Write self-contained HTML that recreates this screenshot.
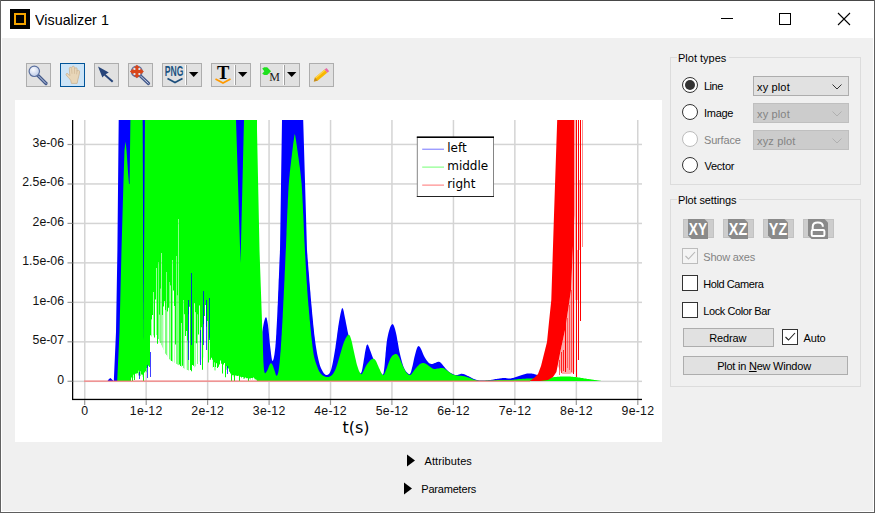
<!DOCTYPE html>
<html lang="en">
<head>
<meta charset="utf-8">
<title>Visualizer 1</title>
<style>
*{box-sizing:border-box;margin:0;padding:0}
html,body{width:875px;height:513px;overflow:hidden;background:#f0f0f0}
body{position:relative;font-family:"Liberation Sans","DejaVu Sans",sans-serif;font-size:11px;color:#000}
.abs{position:absolute}
#frame-top{left:0;top:0;width:875px;height:1px;background:#484848}
#frame-left{left:0;top:0;width:1px;height:513px;background:#626262}
#frame-right{left:874px;top:0;width:1px;height:513px;background:#5e5e5e}
#frame-bottom{left:0;top:512px;width:875px;height:1px;background:#5e5e5e}
#titlebar{left:1px;top:1px;width:873px;height:37px;background:#fff}
#inner{left:1px;top:1px;width:873px;height:511px;border:1px solid #fff;border-top:none;pointer-events:none}
#appicon{left:10px;top:9px;width:20px;height:20px;background:#000}
#appicon i{position:absolute;left:4px;top:4px;width:12px;height:12px;border:2px solid #f5a500}
#title{left:35px;top:10px;font-size:15.5px;line-height:20px;color:#000;white-space:nowrap;transform:scaleX(0.925);transform-origin:0 0}
.tb{position:absolute;top:63px;height:24px;background:#e1e1e1;border:1px solid #adadad}
.tb.sel{background:#cce4f7;border-color:#005499}
.tb svg{position:absolute;left:-1px;top:-1px}
.plot{position:absolute;left:15px;top:100px}
.tk{font-family:"Liberation Sans",sans-serif;font-size:12.3px;fill:#111}
.tkx{letter-spacing:0.25px}
.ttl{font-family:"DejaVu Sans",sans-serif;font-size:16px;fill:#000}
.lg{font-family:"DejaVu Sans",sans-serif;font-size:12px;fill:#000}
.gb{position:absolute;border:1px solid #dcdcdc}
.gbt{position:absolute;background:#f0f0f0;padding:0 3px 0 1px;line-height:14px;white-space:nowrap}
.lbl{position:absolute;line-height:14px;white-space:nowrap}
.dis{color:#838383}
.radio{position:absolute;width:16px;height:16px;border-radius:50%;border:1px solid #333;background:#fff}
.radio.on::after{content:"";position:absolute;left:2px;top:2px;width:10px;height:10px;border-radius:50%;background:#333}
.radio.off{border-color:#bcbcbc}
.combo{position:absolute;width:96px;height:20px;background:#e1e1e1;border:1px solid #adadad;line-height:20px;padding-left:3px;font-size:11px;letter-spacing:0.15px}
.combo.off{background:#cccccc;border-color:#bfbfbf;color:#838383}
.combo svg{position:absolute;right:6px;top:7px}
.cb{position:absolute;width:16px;height:16px;border:1px solid #333;background:#fff}
.cb.off{border-color:#bcbcbc;background:#f4f4f4}
.cb svg{position:absolute;left:0;top:0}
.btn{position:absolute;background:#e1e1e1;border:1px solid #adadad;text-align:center;line-height:17px;height:19px;padding-top:1px;overflow:hidden}
.ib{position:absolute;top:219px;width:31px;height:19px;background:#cdcdcd;border:1px solid #c2c2c2}
.ib svg{position:absolute;left:-1px;top:-1px;overflow:visible}
</style>
</head>
<body>
<div class="abs" id="titlebar"></div>
<div class="abs" id="appicon"><i></i></div>
<div class="abs" id="title">Visualizer 1</div>
<svg class="abs" style="left:715px;top:8px" width="145" height="24" viewBox="0 0 145 24">
  <path d="M6 10.5H18" stroke="#000" stroke-width="1" fill="none"/>
  <rect x="64.5" y="5.5" width="11" height="11" stroke="#000" stroke-width="1" fill="none"/>
  <path d="M123 5L135 17M135 5L123 17" stroke="#000" stroke-width="1.1" fill="none"/>
</svg>

<!-- toolbar -->
<div class="tb" style="left:26px;width:25px">
<svg width="25" height="24" viewBox="0 0 25 24">
  <defs><radialGradient id="lens" cx="0.4" cy="0.35" r="0.7"><stop offset="0" stop-color="#fbfcff"/><stop offset="1" stop-color="#b9c8e6"/></radialGradient></defs>
  <path d="M12 12.5L20 20.5" stroke="#42588a" stroke-width="3.2" stroke-linecap="round"/>
  <path d="M12.5 13L19.8 20.3" stroke="#c9d3ea" stroke-width="1" stroke-linecap="round"/>
  <circle cx="8.3" cy="8.3" r="5.2" fill="url(#lens)" stroke="#5a6f9e" stroke-width="1.2"/>
</svg></div>
<div class="tb sel" style="left:60px;width:25px">
<svg width="25" height="24" viewBox="0 0 25 24">
  <path d="M11.4 20.4 L10.8 17.6 C9.6 15 7 13.6 6.1 11.9 C5.6 10.6 7 9.9 8 10.8 L9.8 12.6 L9.3 5.6 C9.2 4 11.2 3.9 11.5 5.3 L11.9 4.2 C12.2 2.8 14.3 2.8 14.5 4.2 L14.8 5.5 C15.3 4.2 17.2 4.6 17.1 5.9 L17.2 8.1 C17.9 6.8 19.7 7.3 19.6 8.7 C19.3 12.2 18 15.2 17.1 20.4 Z" fill="#e8d6b8" stroke="#c9ae8b" stroke-width="0.7"/>
  <path d="M11.6 5.5L12 10.8M14.6 5L14.4 10.8M17.1 7L16.6 11.3" stroke="#cdb492" stroke-width="0.7" fill="none"/>
</svg></div>
<div class="tb" style="left:94px;width:25px">
<svg width="25" height="24" viewBox="0 0 25 24">
  <path d="M4 3.4 L14.8 9.4 L11.6 11.2 L19.4 18 L18 19.6 L10.2 12.6 L8.4 14.6 Z" fill="#27457a"/>
</svg></div>
<div class="tb" style="left:128px;width:25px">
<svg width="25" height="24" viewBox="0 0 25 24">
  <path d="M12 12.5L20.5 20.5" stroke="#42588a" stroke-width="3.2" stroke-linecap="round"/>
  <path d="M12.5 13L20.3 20.3" stroke="#c9d3ea" stroke-width="1" stroke-linecap="round"/>
  <circle cx="8.8" cy="8.4" r="5.4" fill="#dfe3ec" stroke="#5a6f9e" stroke-width="1.2"/>
  <path d="M8.9 1.8 L12.1 5.1 L10.4 5.1 L10.4 7.0 L12.3 7.0 L12.3 5.3 L15.9 8.5 L12.3 11.7 L12.3 10.0 L10.4 10.0 L10.4 11.9 L12.1 11.9 L8.9 15.2 L5.7 11.9 L7.4 11.9 L7.4 10.0 L5.5 10.0 L5.5 11.7 L1.9 8.5 L5.5 5.3 L5.5 7.0 L7.4 7.0 L7.4 5.1 L5.7 5.1Z" fill="#d9471b"/>
</svg></div>
<div class="tb" style="left:162px;width:40px">
<svg width="40" height="24" viewBox="0 0 40 24">
  <text x="2.8" y="13.4" font-family="Liberation Sans,sans-serif" font-weight="bold" font-size="14" fill="#1d5482" textLength="18.6" lengthAdjust="spacingAndGlyphs">PNG</text>
  <path d="M5.5 15.5L13 19.5L20.5 15.5" stroke="#1d4f7c" stroke-width="1.7" fill="none"/>
  <path d="M23.5 2V22" stroke="#fff" stroke-width="1"/><path d="M24.5 2V22" stroke="#a0a0a0" stroke-width="1"/>
  <path d="M27 9H36.4L31.7 14Z" fill="#000"/>
</svg></div>
<div class="tb" style="left:211px;width:40px">
<svg width="40" height="24" viewBox="0 0 40 24">
  <text x="12.2" y="15.7" text-anchor="middle" font-family="Liberation Serif,serif" font-weight="bold" font-size="18.5" fill="#000">T</text>
  <path d="M4.5 16L12 20L19.5 16" stroke="#ff9a00" stroke-width="1.7" fill="none"/>
  <path d="M23.5 2V22" stroke="#fff" stroke-width="1"/><path d="M24.5 2V22" stroke="#a0a0a0" stroke-width="1"/>
  <path d="M27 9H36.4L31.7 14Z" fill="#000"/>
</svg></div>
<div class="tb" style="left:260px;width:40px">
<svg width="40" height="24" viewBox="0 0 40 24">
  <path d="M2.2 5.6 L4.3 4.3 H7.2 L11.1 8.2 L7.2 12 H4.3 L2.2 10.8 L4.3 8.2 Z" fill="#1fe01f"/>
  <text x="14.5" y="17.8" text-anchor="middle" font-family="Liberation Serif,serif" font-size="12" fill="#1a1a1a">M</text>
  <path d="M23.5 2V22" stroke="#fff" stroke-width="1"/><path d="M24.5 2V22" stroke="#a0a0a0" stroke-width="1"/>
  <path d="M27 9H36.4L31.7 14Z" fill="#000"/>
</svg></div>
<div class="tb" style="left:309px;width:25px">
<svg width="25" height="24" viewBox="0 0 25 24">
  <path d="M4.8 18.5 L6 14.6 L15.6 6.6 L18.2 9.8 L8.6 17.8 Z" fill="#f8b800"/>
  <path d="M6 14.6 L15.6 6.6 L16.4 7.6 L6.8 15.6Z" fill="#ffd34d"/>
  <path d="M15.6 6.6 L17.6 5 L20.2 8.2 L18.2 9.8 Z" fill="#e66aa8"/>
  <path d="M4.8 18.5 L6 14.6 L8.6 17.8 Z" fill="#c08a2a"/>
</svg></div>

<svg class="plot" width="647" height="342" viewBox="0 0 647 342">
<rect width="647" height="342" fill="#fff"/>
<rect x="69.0" y="20.0" width="1.5" height="279.0" fill="#d4d4d4"/>
<rect x="130.4" y="20.0" width="1.5" height="279.0" fill="#d4d4d4"/>
<rect x="191.9" y="20.0" width="1.5" height="279.0" fill="#d4d4d4"/>
<rect x="253.3" y="20.0" width="1.5" height="279.0" fill="#d4d4d4"/>
<rect x="314.8" y="20.0" width="1.5" height="279.0" fill="#d4d4d4"/>
<rect x="376.2" y="20.0" width="1.5" height="279.0" fill="#d4d4d4"/>
<rect x="437.7" y="20.0" width="1.5" height="279.0" fill="#d4d4d4"/>
<rect x="499.1" y="20.0" width="1.5" height="279.0" fill="#d4d4d4"/>
<rect x="560.6" y="20.0" width="1.5" height="279.0" fill="#d4d4d4"/>
<rect x="622.0" y="20.0" width="1.5" height="279.0" fill="#d4d4d4"/>
<rect x="58.0" y="280.6" width="569.0" height="1.5" fill="#d4d4d4"/>
<rect x="58.0" y="241.1" width="569.0" height="1.5" fill="#d4d4d4"/>
<rect x="58.0" y="201.6" width="569.0" height="1.5" fill="#d4d4d4"/>
<rect x="58.0" y="162.1" width="569.0" height="1.5" fill="#d4d4d4"/>
<rect x="58.0" y="122.7" width="569.0" height="1.5" fill="#d4d4d4"/>
<rect x="58.0" y="83.2" width="569.0" height="1.5" fill="#d4d4d4"/>
<rect x="58.0" y="43.7" width="569.0" height="1.5" fill="#d4d4d4"/>
<defs><clipPath id="pc"><rect x="57.0" y="20.0" width="571.0" height="280.0"/></clipPath></defs><g clip-path="url(#pc)">
<polygon fill="#0000ff" points="92.5,281.0 94.0,279.0 95.5,278.0 97.0,279.5 98.5,281.0 98.8,281.0 101.0,232.0 102.4,150.0 103.7,20.0 116.0,20.0 116.0,281.0"/>
<polygon fill="#0000ff" points="247.0,281.0 247.3,232.0 247.6,230.1 248.0,227.3 248.5,224.4 249.0,222.0 250.0,218.4 251.0,217.0 251.7,218.3 252.3,221.0 253.0,225.0 253.2,227.0 253.5,229.2 253.7,231.8 254.0,234.5 254.2,237.3 254.5,240.0 254.7,242.6 255.0,245.0 255.4,248.2 255.8,251.6 256.2,254.9 256.6,257.8 257.0,259.9 257.4,261.0 258.0,260.6 258.7,258.4 259.4,254.7 260.0,250.0 260.2,248.3 260.4,246.6 260.5,244.8 260.7,242.9 260.8,240.9 261.0,238.7 261.1,236.3 261.3,233.7 261.4,230.8 261.6,227.5 261.8,224.0 262.0,220.0 262.1,218.1 262.2,216.1 262.3,213.8 262.4,211.5 262.5,209.0 262.6,206.4 262.8,203.7 262.9,200.9 263.0,198.0 263.1,195.1 263.2,192.1 263.4,189.1 263.5,186.1 263.6,183.1 263.7,180.1 263.9,177.2 264.0,174.3 264.1,171.5 264.2,168.7 264.3,166.1 264.4,163.5 264.5,161.1 264.6,158.8 264.7,156.7 264.8,154.7 264.9,152.9 264.9,151.4 265.0,150.0 267.0,20.0 288.2,20.0 292.0,150.0 292.1,151.4 292.2,153.0 292.4,154.9 292.5,157.0 292.7,159.2 292.9,161.6 293.1,164.2 293.3,166.9 293.5,169.7 293.8,172.5 294.0,175.4 294.2,178.3 294.4,181.2 294.7,184.2 294.9,187.0 295.1,189.8 295.4,192.6 295.6,195.2 295.8,197.7 296.0,200.0 296.2,202.8 296.5,205.6 296.8,208.4 297.0,211.1 297.2,213.8 297.5,216.5 297.8,219.2 298.0,221.8 298.2,224.3 298.5,226.8 298.8,229.2 299.0,231.5 299.2,233.8 299.5,235.9 299.8,238.0 300.0,240.0 300.5,243.7 301.0,247.0 301.5,250.1 302.0,252.9 302.5,255.4 303.0,257.8 303.5,259.9 304.0,262.0 304.8,264.9 305.6,267.2 306.4,269.1 307.2,270.6 308.0,272.0 308.8,273.2 309.6,274.1 310.4,274.7 311.2,275.0 312.0,275.0 312.8,274.8 313.6,274.3 314.4,273.5 315.2,272.1 316.0,270.0 316.5,268.3 317.0,266.2 317.5,264.0 318.0,261.4 318.5,258.7 319.0,255.9 319.5,253.0 320.0,250.0 320.4,247.7 320.7,245.2 321.1,242.6 321.5,239.8 321.9,237.0 322.2,234.2 322.6,231.5 323.0,228.8 323.3,226.3 323.7,224.0 324.0,222.0 324.7,217.9 325.4,214.2 326.1,211.2 326.7,209.0 327.3,208.0 328.0,208.7 328.7,211.2 329.3,214.6 330.0,218.0 330.5,220.2 330.9,222.5 331.4,224.9 331.9,227.5 332.4,230.2 333.0,233.0 333.5,235.5 334.1,238.3 334.6,241.1 335.2,244.0 335.8,246.8 336.4,249.5 337.0,252.0 337.8,255.2 338.6,258.3 339.4,261.1 340.2,263.7 341.0,266.0 341.8,267.8 342.6,269.6 343.4,271.2 344.2,272.4 345.0,273.3 345.6,273.5 346.6,272.1 347.3,268.9 348.0,265.0 348.4,262.8 348.8,260.1 349.3,257.3 349.7,254.6 350.1,252.0 350.5,250.0 351.4,245.8 352.4,244.2 353.2,245.2 354.1,247.5 355.0,250.0 355.7,251.8 356.4,253.8 357.2,255.9 358.0,258.0 358.8,259.8 359.6,261.7 360.4,263.6 361.2,265.4 362.0,267.0 362.8,268.6 363.6,269.9 364.3,271.0 365.0,272.0 365.8,273.1 366.6,274.1 367.4,274.7 368.0,274.5 368.6,273.0 369.0,270.3 369.5,266.0 369.7,264.0 369.9,261.7 370.1,259.0 370.4,256.2 370.6,253.3 370.9,250.4 371.1,247.7 371.4,245.2 371.6,243.0 372.2,239.1 372.8,235.9 373.4,233.3 374.0,231.0 375.1,227.6 376.0,225.5 377.4,224.0 378.2,224.5 379.0,226.0 380.0,229.0 381.0,233.0 381.5,235.3 382.0,237.9 382.4,240.5 382.9,243.0 383.4,246.0 383.9,249.0 384.5,252.0 385.1,254.5 385.7,257.1 386.4,259.7 387.0,262.0 387.8,264.7 388.6,267.0 389.5,269.0 390.2,270.3 391.0,271.4 391.8,272.3 392.5,273.0 393.4,273.8 394.2,274.3 395.0,274.0 396.0,271.9 397.0,268.0 397.6,265.8 398.2,263.0 398.8,260.1 399.4,257.3 400.0,255.0 401.1,250.8 402.0,248.0 402.8,246.4 403.7,246.0 404.4,246.5 405.2,247.5 406.0,249.0 406.7,250.5 407.4,252.3 408.2,254.2 409.0,256.0 409.7,257.3 410.6,258.7 411.4,259.9 412.2,261.1 413.0,262.0 413.9,262.9 414.7,263.4 415.6,263.8 416.4,264.0 417.3,264.0 418.2,263.7 419.1,263.3 420.0,263.0 420.8,262.7 421.6,262.3 422.5,262.0 423.3,261.7 424.0,261.7 424.8,262.0 425.5,262.5 426.2,263.2 427.0,264.0 427.7,264.9 428.5,265.9 429.4,267.0 430.2,268.1 431.0,269.0 431.8,269.8 432.5,270.6 433.3,271.2 434.1,271.9 435.0,272.5 435.7,272.9 436.4,273.3 437.1,273.7 437.9,274.0 438.7,274.4 439.5,274.7 440.2,274.9 441.0,275.0 441.8,275.0 442.5,274.9 443.2,274.7 444.0,274.4 444.8,274.2 445.5,273.9 446.2,273.8 447.0,273.8 447.8,273.9 448.5,274.1 449.2,274.3 450.0,274.6 450.8,275.0 451.5,275.3 452.2,275.7 453.0,276.0 453.8,276.3 454.5,276.7 455.2,277.1 456.0,277.5 456.8,277.9 457.5,278.3 458.2,278.7 459.0,279.0 459.7,279.3 460.4,279.5 461.1,279.8 461.8,280.0 462.5,280.1 463.2,280.3 464.1,280.4 465.0,280.5 465.6,280.5 466.4,280.5 467.1,280.5 467.9,280.5 468.7,280.5 469.6,280.4 470.4,280.4 471.3,280.3 472.1,280.3 472.9,280.2 473.6,280.1 474.4,280.1 475.0,280.0 475.9,279.9 476.7,279.8 477.5,279.7 478.1,279.5 478.8,279.4 479.5,279.3 480.2,279.1 481.0,279.0 481.7,278.9 482.5,278.8 483.3,278.7 484.2,278.5 485.0,278.4 485.8,278.3 486.7,278.2 487.5,278.1 488.3,278.0 489.0,278.0 489.8,278.0 490.6,278.1 491.4,278.2 492.1,278.3 492.8,278.4 493.5,278.5 494.3,278.5 495.0,278.5 495.8,278.4 496.5,278.3 497.2,278.1 498.0,277.9 498.8,277.7 499.5,277.5 500.2,277.2 501.0,277.0 501.7,276.8 502.5,276.5 503.2,276.3 504.0,276.0 504.7,275.7 505.5,275.5 506.2,275.2 507.0,275.0 507.8,274.8 508.6,274.5 509.5,274.3 510.3,274.0 511.2,273.8 512.0,273.6 512.8,273.5 513.6,273.4 514.4,273.4 515.2,273.4 516.0,273.4 516.7,273.5 517.4,273.7 518.2,273.8 519.0,274.0 519.7,274.2 520.4,274.4 521.1,274.6 521.8,274.9 522.6,275.2 523.3,275.5 524.2,275.7 525.0,276.0 525.7,276.2 526.4,276.4 527.1,276.6 527.9,276.8 528.6,277.1 529.4,277.3 530.2,277.5 531.1,277.7 532.0,277.8 533.0,278.0 533.6,278.1 534.3,278.2 535.0,278.2 535.6,278.3 536.4,278.4 537.1,278.4 537.8,278.5 538.6,278.6 539.3,278.6 540.1,278.7 540.9,278.7 541.7,278.8 542.5,278.8 543.3,278.9 544.2,278.9 545.0,279.0 545.7,279.1 546.3,279.1 547.0,279.1 547.6,279.2 548.3,279.2 548.9,279.3 549.6,279.4 550.3,279.4 550.9,279.4 551.6,279.5 552.3,279.6 553.1,279.6 553.8,279.6 554.6,279.7 555.4,279.8 556.2,279.8 557.1,279.9 558.0,279.9 559.0,279.9 560.0,280.0 560.6,280.0 561.3,280.1 562.0,280.1 562.7,280.1 563.5,280.2 564.3,280.2 565.1,280.2 565.9,280.3 566.8,280.3 567.6,280.3 568.5,280.4 569.4,280.4 570.3,280.4 571.2,280.5 572.1,280.5 573.0,280.5 573.9,280.6 574.8,280.6 575.7,280.6 576.6,280.7 577.5,280.7 578.3,280.7 579.1,280.8 579.9,280.8 580.7,280.8 581.4,280.8 582.1,280.9 582.8,280.9 583.5,280.9 584.1,280.9 584.6,280.9 585.1,281.0 585.6,281.0 586.0,281.0"/>
<polygon fill="#00ff00" points="102.2,281.0 104.5,232.0 106.5,150.0 108.4,84.0 109.5,50.0 110.5,41.4 111.5,50.0 113.0,72.0 114.0,84.0 114.6,84.0 115.4,20.0 116.0,20.0 116.0,281.0"/>
<path fill="#00ff00" d="M116 20.0V277.6h1V20.0zM117 20.0V281.0h1V20.0zM118 20.0V274.8h1V20.0zM119 20.0V280.0h1V20.0zM120 20.0V273.7h1V20.0zM121 20.0V273.4h1V20.0zM122 20.0V273.3h1V20.0zM123 20.0V270.7h1V20.0zM124 20.0V275.4h1V20.0zM125 20.0V271.6h1V20.0zM126 20.0V274.4h1V20.0zM127 20.0V274.7h1V20.0zM128 20.0V281.0h1V20.0zM129 20.0V272.6h1V20.0zM130 20.0V271.2h1V20.0zM131 20.0V268.3h1V20.0zM132 20.0V267.7h1V20.0zM133 20.0V265.7h1V20.0zM134 20.0V267.1h1V20.0zM135 20.0V235.2h1V20.0zM136 20.0V219.4h1V20.0zM137 20.0V215.1h1V20.0zM138 20.0V192.0h1V20.0zM139 20.0V237.5h1V20.0zM140 20.0V199.5h1V20.0zM141 20.0V168.0h1V20.0zM142 20.0V243.7h1V20.0zM143 20.0V162.0h1V20.0zM144 20.0V214.8h1V20.0zM145 20.0V188.7h1V20.0zM146 20.0V153.0h1V20.0zM147 20.0V214.9h1V20.0zM148 20.0V206.6h1V20.0zM149 20.0V201.3h1V20.0zM150 20.0V210.3h1V20.0zM151 20.0V172.0h1V20.0zM152 20.0V211.6h1V20.0zM153 20.0V207.8h1V20.0zM154 20.0V182.0h1V20.0zM155 20.0V185.5h1V20.0zM156 20.0V260.9h1V20.0zM157 20.0V160.0h1V20.0zM158 20.0V190.4h1V20.0zM159 20.0V206.1h1V20.0zM160 20.0V244.5h1V20.0zM161 20.0V156.0h1V20.0zM162 20.0V195.5h1V20.0zM163 20.0V119.0h1V20.0zM164 20.0V264.5h1V20.0zM165 20.0V266.0h1V20.0zM166 20.0V222.9h1V20.0zM167 20.0V265.8h1V20.0zM168 20.0V200.0h1V20.0zM169 20.0V214.2h1V20.0zM170 20.0V236.0h1V20.0zM171 20.0V231.1h1V20.0zM172 20.0V240.7h1V20.0zM173 20.0V214.4h1V20.0zM174 20.0V206.7h1V20.0zM175 20.0V269.9h1V20.0zM176 20.0V271.2h1V20.0zM177 20.0V265.0h1V20.0zM178 20.0V265.8h1V20.0zM179 20.0V203.2h1V20.0zM180 20.0V212.3h1V20.0zM181 20.0V243.2h1V20.0zM182 20.0V214.4h1V20.0zM183 20.0V234.4h1V20.0zM184 20.0V205.6h1V20.0zM185 20.0V242.4h1V20.0zM186 20.0V227.3h1V20.0zM187 20.0V269.7h1V20.0zM188 20.0V224.3h1V20.0zM189 20.0V216.1h1V20.0zM190 20.0V205.0h1V20.0zM191 20.0V226.7h1V20.0zM192 20.0V220.9h1V20.0zM193 20.0V262.4h1V20.0zM194 20.0V237.8h1V20.0zM195 20.0V259.7h1V20.0zM196 20.0V257.8h1V20.0zM197 20.0V259.7h1V20.0zM198 20.0V266.9h1V20.0zM199 20.0V262.6h1V20.0zM200 20.0V266.9h1V20.0zM201 20.0V263.3h1V20.0zM202 20.0V268.1h1V20.0zM203 20.0V266.8h1V20.0zM204 20.0V264.4h1V20.0zM205 20.0V260.4h1V20.0zM206 20.0V263.7h1V20.0zM207 20.0V273.6h1V20.0zM208 20.0V264.6h1V20.0zM209 20.0V263.0h1V20.0zM210 20.0V277.2h1V20.0zM211 20.0V266.6h1V20.0zM212 20.0V268.1h1V20.0zM213 20.0V268.4h1V20.0zM214 20.0V271.8h1V20.0zM215 20.0V273.6h1V20.0zM216 20.0V281.0h1V20.0zM217 20.0V275.3h1V20.0zM218 20.0V275.2h1V20.0zM219 20.0V281.0h1V20.0zM220 20.0V275.4h1V20.0zM221 20.0V275.7h1V20.0zM222 20.0V276.0h1V20.0zM223 20.0V275.8h1V20.0zM224 20.0V281.0h1V20.0zM225 20.0V276.7h1V20.0zM226 20.0V277.4h1V20.0zM227 20.0V277.1h1V20.0zM228 20.0V277.2h1V20.0zM229 20.0V278.4h1V20.0zM230 20.0V277.5h1V20.0zM231 20.0V278.1h1V20.0zM232 20.0V278.1h1V20.0zM233 20.0V281.0h1V20.0zM234 20.0V278.4h1V20.0zM235 20.0V278.0h1V20.0zM236 20.0V278.0h1V20.0zM237 20.0V278.1h1V20.0zM238 20.0V277.5h1V20.0zM239 20.0V278.4h1V20.0zM240 20.0V279.3h1V20.0zM241 20.0V279.7h1V20.0z"/>
<rect x="116" y="277.6" width="1" height="2.0" fill="#00ff00" fill-opacity="0.15"/>
<rect x="118" y="274.8" width="1" height="3.1" fill="#00ff00" fill-opacity="0.25"/>
<rect x="121" y="273.4" width="1" height="2.0" fill="#00ff00" fill-opacity="0.15"/>
<rect x="123" y="270.7" width="1" height="4.8" fill="#00ff00" fill-opacity="0.50"/>
<rect x="125" y="271.6" width="1" height="4.5" fill="#00ff00" fill-opacity="0.50"/>
<rect x="127" y="274.7" width="1" height="2.1" fill="#00ff00" fill-opacity="0.25"/>
<rect x="131" y="268.3" width="1" height="4.0" fill="#00ff00" fill-opacity="0.50"/>
<rect x="136" y="219.4" width="1" height="17.1" fill="#00ff00" fill-opacity="0.35"/>
<rect x="138" y="192.0" width="1" height="43.4" fill="#00ff00" fill-opacity="0.40"/>
<rect x="141" y="168.0" width="1" height="67.0" fill="#00ff00" fill-opacity="0.40"/>
<rect x="143" y="162.0" width="1" height="77.0" fill="#00ff00" fill-opacity="0.55"/>
<rect x="144" y="214.8" width="1" height="26.2" fill="#00ff00" fill-opacity="0.35"/>
<rect x="145" y="188.7" width="1" height="54.4" fill="#00ff00" fill-opacity="0.50"/>
<rect x="146" y="153.0" width="1" height="92.3" fill="#00ff00" fill-opacity="0.40"/>
<rect x="147" y="214.9" width="1" height="32.6" fill="#00ff00" fill-opacity="0.35"/>
<rect x="148" y="206.6" width="1" height="43.1" fill="#00ff00" fill-opacity="0.15"/>
<rect x="150" y="210.3" width="1" height="43.4" fill="#00ff00" fill-opacity="0.50"/>
<rect x="151" y="172.0" width="1" height="83.1" fill="#00ff00" fill-opacity="0.50"/>
<rect x="152" y="211.6" width="1" height="44.9" fill="#00ff00" fill-opacity="0.15"/>
<rect x="154" y="182.0" width="1" height="77.3" fill="#00ff00" fill-opacity="0.55"/>
<rect x="155" y="185.5" width="1" height="74.8" fill="#00ff00" fill-opacity="0.35"/>
<rect x="157" y="160.0" width="1" height="101.5" fill="#00ff00" fill-opacity="0.45"/>
<rect x="159" y="206.1" width="1" height="56.6" fill="#00ff00" fill-opacity="0.25"/>
<rect x="161" y="156.0" width="1" height="107.9" fill="#00ff00" fill-opacity="0.50"/>
<rect x="162" y="195.5" width="1" height="69.0" fill="#00ff00" fill-opacity="0.50"/>
<rect x="163" y="119.0" width="1" height="146.1" fill="#00ff00" fill-opacity="0.45"/>
<rect x="166" y="222.9" width="1" height="44.0" fill="#00ff00" fill-opacity="0.35"/>
<rect x="168" y="200.0" width="1" height="68.1" fill="#00ff00" fill-opacity="0.50"/>
<rect x="169" y="214.2" width="1" height="54.5" fill="#00ff00" fill-opacity="0.25"/>
<rect x="171" y="231.1" width="1" height="38.5" fill="#00ff00" fill-opacity="0.15"/>
<rect x="172" y="240.7" width="1" height="29.3" fill="#00ff00" fill-opacity="0.50"/>
<rect x="173" y="214.4" width="1" height="56.0" fill="#00ff00" fill-opacity="0.50"/>
<rect x="179" y="203.2" width="1" height="64.2" fill="#00ff00" fill-opacity="0.25"/>
<rect x="180" y="212.3" width="1" height="54.1" fill="#00ff00" fill-opacity="0.35"/>
<rect x="182" y="214.4" width="1" height="49.6" fill="#00ff00" fill-opacity="0.50"/>
<rect x="184" y="205.6" width="1" height="56.0" fill="#00ff00" fill-opacity="0.15"/>
<rect x="186" y="227.3" width="1" height="32.2" fill="#00ff00" fill-opacity="0.15"/>
<rect x="188" y="224.3" width="1" height="33.2" fill="#00ff00" fill-opacity="0.15"/>
<rect x="194" y="237.8" width="1" height="22.2" fill="#00ff00" fill-opacity="0.25"/>
<rect x="197" y="259.7" width="1" height="8.2" fill="#00ff00" fill-opacity="0.15"/>
<rect x="199" y="262.6" width="1" height="7.8" fill="#00ff00" fill-opacity="0.35"/>
<rect x="200" y="266.9" width="1" height="3.6" fill="#00ff00" fill-opacity="0.35"/>
<rect x="211" y="266.6" width="1" height="3.2" fill="#00ff00" fill-opacity="0.50"/>
<rect x="212" y="268.1" width="1" height="2.9" fill="#00ff00" fill-opacity="0.15"/>
<rect x="218" y="275.2" width="1" height="1.6" fill="#00ff00" fill-opacity="0.25"/>
<rect x="226" y="277.4" width="1" height="1.2" fill="#00ff00" fill-opacity="0.15"/>
<rect x="228" y="277.2" width="1" height="1.7" fill="#00ff00" fill-opacity="0.50"/>
<rect x="231" y="278.1" width="1" height="1.0" fill="#00ff00" fill-opacity="0.25"/>
<rect x="232" y="278.1" width="1" height="1.2" fill="#00ff00" fill-opacity="0.25"/>
<rect x="235" y="278.0" width="1" height="1.5" fill="#00ff00" fill-opacity="0.50"/>
<rect x="237" y="278.1" width="1" height="1.7" fill="#00ff00" fill-opacity="0.35"/>
<rect x="239" y="278.4" width="1" height="1.6" fill="#00ff00" fill-opacity="0.15"/>
<rect x="240" y="279.3" width="1" height="0.8" fill="#00ff00" fill-opacity="0.25"/>
<rect x="132" y="265.0" width="1" height="13.0" fill="#0000ff" fill-opacity="0.75"/>
<rect x="135" y="252.0" width="1" height="25.0" fill="#0000ff" fill-opacity="0.75"/>
<rect x="176" y="173.0" width="1" height="72.0" fill="#0000ff" fill-opacity="0.75"/>
<rect x="173" y="200.0" width="1" height="60.0" fill="#0000ff" fill-opacity="0.75"/>
<rect x="188" y="191.0" width="1" height="54.0" fill="#0000ff" fill-opacity="0.75"/>
<rect x="191" y="200.0" width="1" height="50.0" fill="#0000ff" fill-opacity="0.75"/>
<rect x="194" y="198.0" width="1" height="42.0" fill="#0000ff" fill-opacity="0.75"/>
<rect x="185" y="230.0" width="1" height="35.0" fill="#0000ff" fill-opacity="0.75"/>
<rect x="124" y="272.0" width="1" height="7.0" fill="#0000ff" fill-opacity="0.75"/>
<rect x="212" y="266.0" width="1" height="8.0" fill="#0000ff" fill-opacity="0.75"/>
<polygon fill="#0000ff" points="221.0,20.0 229.0,20.0 225.5,163.0"/>
<polygon fill="#0000ff" points="127.7,20.0 129.9,20.0 128.5,246.0"/>
<polygon fill="#00ff00" points="241.8,281.0 241.8,20.0 244.5,150.0 247.3,230.0 247.4,231.5 247.4,233.4 247.5,235.6 247.6,238.1 247.7,240.9 247.8,243.8 247.9,246.8 248.0,249.9 248.1,253.0 248.2,256.1 248.3,259.0 248.4,261.8 248.6,264.3 248.7,266.6 248.9,268.5 249.0,270.0 249.7,273.1 250.5,273.3 251.3,272.1 252.0,271.0 253.1,268.8 254.0,266.0 255.0,264.0 256.0,263.0 257.0,263.9 258.0,266.0 259.0,268.9 260.0,272.0 260.9,274.9 261.8,276.0 262.5,274.8 263.3,272.2 264.0,268.0 264.2,266.2 264.5,264.1 264.7,261.9 264.9,259.5 265.1,256.9 265.3,254.1 265.6,251.2 265.8,248.2 266.0,245.0 266.1,242.9 266.3,240.8 266.4,238.7 266.5,236.6 266.7,234.4 266.8,232.2 266.9,229.8 267.1,227.4 267.2,224.8 267.4,222.2 267.5,219.4 267.7,216.4 267.8,213.3 268.0,210.0 268.1,208.0 268.2,205.8 268.3,203.5 268.4,201.1 268.6,198.6 268.7,196.1 268.8,193.4 268.9,190.7 269.1,188.0 269.2,185.3 269.3,182.5 269.5,179.7 269.6,176.9 269.7,174.1 269.8,171.4 270.0,168.7 270.1,166.1 270.2,163.5 270.3,161.0 270.4,158.6 270.5,156.2 270.6,154.0 270.7,151.9 270.8,150.0 271.0,146.5 271.1,143.3 271.2,140.5 271.3,138.0 271.4,135.7 271.5,133.5 271.5,131.4 271.6,129.3 271.7,127.2 271.8,125.0 271.9,122.6 272.0,120.0 272.1,117.6 272.2,115.1 272.3,112.5 272.4,109.9 272.6,107.2 272.7,104.5 272.8,101.8 272.9,99.0 273.1,96.4 273.2,93.7 273.3,91.2 273.5,88.7 273.6,86.3 273.8,84.0 274.0,81.0 274.3,78.0 274.6,75.2 274.8,72.5 275.1,69.9 275.4,67.3 275.7,64.9 276.0,62.5 276.2,60.2 276.5,58.0 276.9,54.9 277.2,51.9 277.6,49.1 277.9,46.5 278.2,44.0 278.5,41.9 278.8,40.0 279.4,35.5 279.8,34.0 280.2,35.4 280.9,40.0 281.2,41.8 281.5,43.9 281.9,46.3 282.2,48.9 282.6,51.6 283.0,54.4 283.4,57.2 283.8,60.0 284.1,62.4 284.4,64.8 284.8,67.3 285.1,69.7 285.4,72.3 285.7,75.0 286.0,77.8 286.3,80.8 286.6,84.0 286.8,86.2 286.9,88.6 287.1,91.0 287.2,93.6 287.4,96.2 287.5,98.9 287.6,101.6 287.8,104.4 287.9,107.1 288.0,109.8 288.1,112.5 288.3,115.1 288.4,117.6 288.5,120.0 288.6,122.6 288.7,125.1 288.8,127.5 288.9,129.7 289.0,131.9 289.1,134.1 289.2,136.4 289.3,138.7 289.4,141.2 289.6,143.9 289.7,146.8 289.9,150.0 290.0,152.0 290.1,154.2 290.3,156.4 290.4,158.7 290.5,161.1 290.6,163.5 290.8,166.0 290.9,168.6 291.1,171.1 291.2,173.8 291.4,176.4 291.5,179.0 291.7,181.7 291.9,184.4 292.1,187.0 292.2,189.7 292.4,192.3 292.6,194.9 292.8,197.5 293.0,200.0 293.2,202.5 293.4,205.2 293.7,207.8 293.9,210.5 294.1,213.3 294.4,216.1 294.6,218.9 294.9,221.6 295.2,224.4 295.4,227.1 295.7,229.8 296.0,232.4 296.2,235.0 296.5,237.5 296.8,239.9 297.0,242.2 297.3,244.3 297.5,246.4 297.8,248.3 298.0,250.0 298.7,254.7 299.4,258.1 300.1,260.6 300.7,262.5 301.3,264.2 302.0,266.0 302.8,268.2 303.5,270.0 304.3,271.5 305.1,272.8 306.0,274.0 306.7,274.6 307.4,275.2 308.1,275.7 308.9,276.1 309.7,276.5 310.5,276.7 311.3,276.9 312.0,277.0 312.9,277.0 313.8,276.9 314.6,276.6 315.4,276.2 316.2,275.7 317.0,275.0 317.9,274.0 318.7,272.8 319.4,271.5 320.2,269.9 321.0,268.0 321.8,265.8 322.6,263.2 323.4,260.5 324.2,257.7 325.0,255.0 325.8,252.3 326.6,249.5 327.4,246.8 328.2,244.2 329.0,242.0 329.9,240.0 330.8,238.1 331.8,236.5 332.6,235.3 333.4,234.7 334.4,235.0 335.2,236.5 336.0,239.0 336.6,241.0 337.2,243.6 337.8,246.4 338.4,249.3 339.0,252.0 339.6,254.7 340.2,257.4 340.8,260.1 341.4,262.7 342.0,265.0 342.9,267.8 343.8,270.4 344.8,272.6 345.6,274.0 346.5,274.3 347.2,273.4 348.0,272.0 348.7,270.8 349.4,269.2 350.2,267.6 351.0,266.0 351.7,264.8 352.6,263.6 353.4,262.4 354.2,261.4 355.0,260.5 355.9,259.7 356.8,259.1 357.6,258.8 358.4,258.7 359.3,259.0 360.1,259.7 361.0,261.0 361.7,262.4 362.4,264.2 363.2,266.1 364.0,268.0 364.8,269.6 365.6,271.4 366.4,273.1 367.2,274.4 368.0,275.0 368.8,274.7 369.6,273.4 370.3,271.7 371.0,270.0 371.8,268.2 372.5,266.1 373.2,263.9 374.0,262.0 374.7,260.3 375.4,258.6 376.2,257.2 377.0,256.0 377.8,255.3 378.7,254.7 379.6,254.2 380.5,254.0 381.3,254.0 382.3,254.5 383.1,255.5 384.0,257.0 384.7,258.4 385.4,260.2 386.2,262.1 387.0,264.0 387.7,265.6 388.5,267.4 389.4,269.1 390.2,270.7 391.0,272.0 391.8,273.0 392.6,273.8 393.5,274.5 394.3,274.9 395.0,275.0 395.8,274.7 396.6,273.9 397.3,273.0 398.0,272.0 398.7,271.1 399.4,270.1 400.2,269.0 401.0,268.0 401.7,267.2 402.5,266.3 403.4,265.4 404.2,264.6 405.0,264.0 405.9,263.5 406.8,263.2 407.7,263.0 408.6,263.0 409.5,263.2 410.3,263.5 411.1,264.0 412.0,264.5 412.8,265.0 413.6,265.7 414.4,266.3 415.3,267.0 416.0,267.5 416.8,268.0 417.5,268.5 418.2,268.8 419.0,269.0 419.7,269.0 420.5,268.9 421.3,268.8 422.1,268.6 423.0,268.5 423.8,268.4 424.6,268.2 425.5,268.1 426.4,267.9 427.2,267.9 428.0,268.0 428.8,268.3 429.6,268.7 430.4,269.3 431.2,269.9 432.0,270.5 432.8,271.0 433.6,271.7 434.5,272.3 435.3,272.9 436.2,273.5 437.0,274.0 437.8,274.4 438.5,274.7 439.3,274.9 440.0,275.1 440.8,275.3 441.7,275.5 442.4,275.6 443.1,275.7 443.9,275.7 444.7,275.7 445.5,275.7 446.3,275.8 447.2,275.9 448.0,276.0 448.7,276.2 449.5,276.3 450.3,276.5 451.1,276.8 451.9,277.0 452.6,277.2 453.4,277.5 454.2,277.7 455.0,278.0 455.7,278.3 456.4,278.6 457.1,278.9 457.8,279.2 458.5,279.5 459.2,279.8 460.0,280.1 461.0,280.3 462.0,280.5 462.6,280.6 463.3,280.6 464.0,280.7 464.7,280.7 465.5,280.7 466.3,280.7 467.1,280.7 467.9,280.7 468.7,280.7 469.6,280.7 470.4,280.6 471.2,280.6 472.0,280.6 472.8,280.6 473.6,280.5 474.3,280.5 475.0,280.5 475.9,280.5 476.7,280.4 477.5,280.4 478.3,280.4 479.1,280.3 479.8,280.3 480.6,280.2 481.3,280.2 482.0,280.1 482.8,280.1 483.5,280.1 484.2,280.0 485.0,280.0 485.8,280.0 486.5,280.0 487.3,280.0 488.1,280.0 488.8,280.0 489.6,280.0 490.4,280.0 491.2,280.1 491.9,280.1 492.7,280.1 493.5,280.1 494.2,280.0 495.0,280.0 495.8,280.0 496.5,279.9 497.3,279.8 498.1,279.7 498.8,279.7 499.6,279.6 500.4,279.5 501.2,279.4 501.9,279.3 502.7,279.2 503.5,279.1 504.2,279.1 505.0,279.0 505.8,278.9 506.5,278.9 507.3,278.8 508.1,278.8 508.8,278.7 509.6,278.7 510.4,278.7 511.2,278.6 511.9,278.6 512.7,278.6 513.5,278.5 514.2,278.5 515.0,278.5 515.8,278.5 516.6,278.5 517.3,278.5 518.1,278.5 518.9,278.5 519.7,278.5 520.5,278.5 521.3,278.5 522.1,278.5 522.8,278.5 523.6,278.5 524.3,278.5 525.0,278.5 525.9,278.5 526.7,278.4 527.6,278.4 528.4,278.4 529.2,278.3 530.0,278.3 530.7,278.2 531.5,278.1 532.2,278.1 533.0,278.0 533.8,277.9 534.6,277.8 535.3,277.7 536.0,277.6 536.7,277.4 537.5,277.3 538.3,277.2 539.1,277.1 540.0,277.0 540.7,276.9 541.4,276.9 542.1,276.8 542.9,276.8 543.6,276.7 544.4,276.7 545.2,276.6 546.0,276.6 546.8,276.6 547.6,276.5 548.4,276.5 549.2,276.5 550.0,276.5 550.8,276.5 551.5,276.5 552.3,276.5 553.1,276.5 553.8,276.6 554.6,276.6 555.4,276.6 556.2,276.7 556.9,276.7 557.7,276.8 558.5,276.9 559.2,276.9 560.0,277.0 560.8,277.1 561.5,277.2 562.3,277.3 563.1,277.4 563.8,277.5 564.6,277.6 565.4,277.8 566.2,277.9 566.9,278.0 567.7,278.1 568.5,278.3 569.2,278.4 570.0,278.5 570.8,278.6 571.6,278.7 572.4,278.9 573.2,279.0 574.0,279.1 574.8,279.2 575.6,279.3 576.4,279.5 577.2,279.6 577.9,279.7 578.6,279.8 579.3,279.9 580.0,280.0 581.0,280.2 582.1,280.3 583.0,280.5 584.0,280.6 584.8,280.7 585.6,280.8 586.2,280.9 586.7,281.0"/>
<polygon fill="#ff0000" fill-opacity="0.33" points="559.4,115.0 559.4,272.0 555.0,274.0 547.0,274.0 543.0,266.0 545.5,251.0 550.0,230.0 553.8,205.0 556.0,190.0"/>
<polygon fill="#ff0000" points="514.7,281.0 519.0,278.0 523.0,274.0 526.0,266.0 529.0,254.0 532.0,242.0 534.0,222.0 536.3,200.0 539.0,115.0 542.2,20.0 559.4,20.0 559.4,115.0 556.0,190.0 553.8,205.0 550.0,230.0 545.5,251.0 543.0,264.0 541.4,272.0 538.0,277.0 533.0,280.0 525.0,281.0"/>
<rect x="561" y="20.0" width="1" height="257.0" fill="#ff0000" fill-opacity="1.00"/>
<rect x="563" y="20.0" width="1" height="240.0" fill="#ff0000" fill-opacity="1.00"/>
<rect x="565" y="20.0" width="1" height="201.0" fill="#ff0000" fill-opacity="1.00"/>
<rect x="567" y="20.0" width="1" height="127.0" fill="#ff0000" fill-opacity="0.45"/>
<rect x="558" y="115.0" width="1" height="159.0" fill="#ff0000" fill-opacity="1.00"/>
<rect x="556" y="190.0" width="1" height="82.0" fill="#ff0000" fill-opacity="0.55"/>
<rect x="554" y="205.0" width="1" height="65.0" fill="#ff0000" fill-opacity="0.50"/>
<rect x="552" y="218.0" width="1" height="50.0" fill="#ff0000" fill-opacity="0.45"/>
<rect x="550" y="212.0" width="1" height="60.0" fill="#ff0000" fill-opacity="1.00"/>
<rect x="548" y="250.0" width="1" height="21.0" fill="#ff0000" fill-opacity="0.80"/>
<rect x="546" y="252.0" width="1" height="21.0" fill="#ff0000" fill-opacity="0.80"/>
<rect x="544" y="260.0" width="1" height="15.0" fill="#ff0000" fill-opacity="0.60"/>
<rect x="562" y="150.0" width="1" height="50.0" fill="#ff0000" fill-opacity="0.35"/>
<rect x="564" y="80.0" width="1" height="70.0" fill="#ff0000" fill-opacity="0.30"/>
<rect x="560" y="20.0" width="1" height="180.0" fill="#ff0000" fill-opacity="0.25"/>
<rect x="69.0" y="280.6" width="446.0" height="1" fill="#ff6a6a"/>
</g>
<rect x="57.0" y="20.0" width="1.25" height="280.0" fill="#000"/>
<rect x="57.0" y="298.8" width="570.0" height="1.3" fill="#000"/>
<rect x="69.1" y="300.0" width="1.2" height="5" fill="#999"/>
<rect x="130.6" y="300.0" width="1.2" height="5" fill="#999"/>
<rect x="192.0" y="300.0" width="1.2" height="5" fill="#999"/>
<rect x="253.5" y="300.0" width="1.2" height="5" fill="#999"/>
<rect x="314.9" y="300.0" width="1.2" height="5" fill="#999"/>
<rect x="376.3" y="300.0" width="1.2" height="5" fill="#999"/>
<rect x="437.8" y="300.0" width="1.2" height="5" fill="#999"/>
<rect x="499.2" y="300.0" width="1.2" height="5" fill="#999"/>
<rect x="560.7" y="300.0" width="1.2" height="5" fill="#999"/>
<rect x="622.2" y="300.0" width="1.2" height="5" fill="#999"/>
<rect x="52.5" y="280.7" width="5" height="1.2" fill="#999"/>
<rect x="52.5" y="241.2" width="5" height="1.2" fill="#999"/>
<rect x="52.5" y="201.8" width="5" height="1.2" fill="#999"/>
<rect x="52.5" y="162.3" width="5" height="1.2" fill="#999"/>
<rect x="52.5" y="122.8" width="5" height="1.2" fill="#999"/>
<rect x="52.5" y="83.4" width="5" height="1.2" fill="#999"/>
<rect x="52.5" y="43.9" width="5" height="1.2" fill="#999"/>
<text class="tk" x="49.0" y="283.7" text-anchor="end">0</text>
<text class="tk" x="49.0" y="244.2" text-anchor="end">5e-07</text>
<text class="tk" x="49.0" y="204.8" text-anchor="end">1e-06</text>
<text class="tk" x="49.0" y="165.3" text-anchor="end">1.5e-06</text>
<text class="tk" x="49.0" y="125.8" text-anchor="end">2e-06</text>
<text class="tk" x="49.0" y="86.4" text-anchor="end">2.5e-06</text>
<text class="tk" x="49.0" y="46.9" text-anchor="end">3e-06</text>
<text class="tk tkx" x="69.8" y="315.3" text-anchor="middle">0</text>
<text class="tk tkx" x="131.2" y="315.3" text-anchor="middle">1e-12</text>
<text class="tk tkx" x="192.7" y="315.3" text-anchor="middle">2e-12</text>
<text class="tk tkx" x="254.2" y="315.3" text-anchor="middle">3e-12</text>
<text class="tk tkx" x="315.6" y="315.3" text-anchor="middle">4e-12</text>
<text class="tk tkx" x="377.1" y="315.3" text-anchor="middle">5e-12</text>
<text class="tk tkx" x="438.5" y="315.3" text-anchor="middle">6e-12</text>
<text class="tk tkx" x="500.0" y="315.3" text-anchor="middle">7e-12</text>
<text class="tk tkx" x="561.4" y="315.3" text-anchor="middle">8e-12</text>
<text class="tk tkx" x="622.9" y="315.3" text-anchor="middle">9e-12</text>
<text class="ttl" x="341.0" y="332.5" text-anchor="middle">t(s)</text>
<rect x="402.2" y="37.2" width="76.4" height="59.3" fill="#fff"/>
<rect x="401.8" y="37.2" width="1" height="59.3" fill="#858585"/>
<rect x="478.0" y="37.2" width="1" height="59.3" fill="#858585"/>
<rect x="401.8" y="36.4" width="77.2" height="1.6" fill="#000"/>
<rect x="401.8" y="96.0" width="77.2" height="1" fill="#222"/>
<rect x="407.2" y="48.7" width="21.8" height="1" fill="#7474ff"/>
<text class="lg" x="432.2" y="51.9">left</text>
<rect x="407.2" y="66.6" width="21.8" height="1" fill="#74ff74"/>
<text class="lg" x="432.2" y="69.8">middle</text>
<rect x="407.2" y="84.6" width="21.8" height="1" fill="#ff7474"/>
<text class="lg" x="432.2" y="87.8">right</text>
</svg>

<!-- bottom expanders -->
<svg class="abs" style="left:406px;top:454px" width="10" height="13"><path d="M1 0.5V12.5L9 6.5Z" fill="#000"/></svg>
<div class="lbl" style="left:424.5px;top:453.7px;letter-spacing:0.1px">Attributes</div>
<svg class="abs" style="left:403px;top:482px" width="10" height="13"><path d="M1 0.5V12.5L9 6.5Z" fill="#000"/></svg>
<div class="lbl" style="left:421.3px;top:482.1px;letter-spacing:-0.2px">Parameters</div>

<!-- right panel: Plot types -->
<div class="gb" style="left:670px;top:57px;width:191px;height:128px"></div>
<div class="gbt" style="left:677px;top:51px">Plot types</div>
<div class="radio on" style="left:682px;top:77px"></div><div class="lbl" style="left:704px;top:79px;letter-spacing:-0.5px">Line</div>
<div class="radio" style="left:682px;top:104px"></div><div class="lbl" style="left:704px;top:106px;letter-spacing:-0.27px">Image</div>
<div class="radio off" style="left:682px;top:131px"></div><div class="lbl dis" style="left:704px;top:133px;letter-spacing:-0.18px">Surface</div>
<div class="radio" style="left:682px;top:157px"></div><div class="lbl" style="left:704.5px;top:158.6px;letter-spacing:-0.25px">Vector</div>
<div class="combo" style="left:753px;top:76px">xy plot<svg width="10" height="7"><path d="M0.5 0.5L5 5L9.5 0.5" stroke="#333" fill="none"/></svg></div>
<div class="combo off" style="left:753px;top:103px">xy plot<svg width="10" height="7"><path d="M0.5 0.5L5 5L9.5 0.5" stroke="#b0b0b0" fill="none"/></svg></div>
<div class="combo off" style="left:753px;top:130px">xyz plot<svg width="10" height="7"><path d="M0.5 0.5L5 5L9.5 0.5" stroke="#b0b0b0" fill="none"/></svg></div>

<!-- right panel: Plot settings -->
<div class="gb" style="left:670px;top:199px;width:191px;height:188px"></div>
<div class="gbt" style="left:677px;top:193px;letter-spacing:-0.12px">Plot settings</div>
<div class="ib" style="left:683px"><svg width="31" height="21" viewBox="0 0 31 21"><path d="M5 0H21.5L25 3.5V20H8.5L5 16.5Z" fill="#8a8a8a"/><text x="15" y="15.6" text-anchor="middle" font-family="Liberation Sans,sans-serif" font-weight="bold" font-size="15.6" fill="#fff" textLength="18.4" lengthAdjust="spacingAndGlyphs">XY</text></svg></div>
<div class="ib" style="left:723px"><svg width="31" height="21" viewBox="0 0 31 21"><path d="M5 0H21.5L25 3.5V20H8.5L5 16.5Z" fill="#8a8a8a"/><text x="15" y="15.6" text-anchor="middle" font-family="Liberation Sans,sans-serif" font-weight="bold" font-size="15.6" fill="#fff" textLength="18.4" lengthAdjust="spacingAndGlyphs">XZ</text></svg></div>
<div class="ib" style="left:763px"><svg width="31" height="21" viewBox="0 0 31 21"><path d="M5 0H21.5L25 3.5V20H8.5L5 16.5Z" fill="#8a8a8a"/><text x="15" y="15.6" text-anchor="middle" font-family="Liberation Sans,sans-serif" font-weight="bold" font-size="15.6" fill="#fff" textLength="18.4" lengthAdjust="spacingAndGlyphs">YZ</text></svg></div>
<div class="ib" style="left:803px"><svg width="31" height="21" viewBox="0 0 31 21"><path d="M5 0H21.5L25 3.5V20H8.5L5 16.5Z" fill="#8a8a8a"/><path d="M9.7 10.6V8C9.7 4.8 11.9 3.6 14.8 3.6C17.7 3.6 19.9 4.8 19.9 7.8" stroke="#fff" stroke-width="2" fill="none"/><rect x="8.7" y="11.1" width="12.7" height="5.8" rx="1.2" stroke="#fff" stroke-width="2" fill="none"/></svg></div>
<div class="cb off" style="left:682px;top:248px"><svg width="14" height="14"><path d="M2.5 7L5.5 10L12 3" stroke="#b8b8b8" stroke-width="1.1" fill="none"/></svg></div>
<div class="lbl dis" style="left:703.3px;top:250px;letter-spacing:-0.24px">Show axes</div>
<div class="cb" style="left:682px;top:275px"></div>
<div class="lbl" style="left:703.3px;top:277px;letter-spacing:-0.43px">Hold Camera</div>
<div class="cb" style="left:682px;top:302px"></div>
<div class="lbl" style="left:703.3px;top:304px;letter-spacing:-0.42px">Lock Color Bar</div>
<div class="btn" style="left:683px;top:328px;width:91px;letter-spacing:-0.18px;padding-right:1.5px">Redraw</div>
<div class="cb" style="left:782px;top:329px"><svg width="14" height="14"><path d="M2.5 7L5.5 10L12 3" stroke="#222" stroke-width="1.1" fill="none"/></svg></div>
<div class="lbl" style="left:803.6px;top:331px;letter-spacing:-0.2px">Auto</div>
<div class="btn" style="left:683px;top:356px;width:165px;letter-spacing:-0.23px;padding-right:3px">Plot in <u>N</u>ew Window</div>

<div class="abs" id="inner"></div>
<div class="abs" id="frame-top"></div>
<div class="abs" id="frame-left"></div>
<div class="abs" id="frame-right"></div>
<div class="abs" id="frame-bottom"></div>
</body>
</html>
